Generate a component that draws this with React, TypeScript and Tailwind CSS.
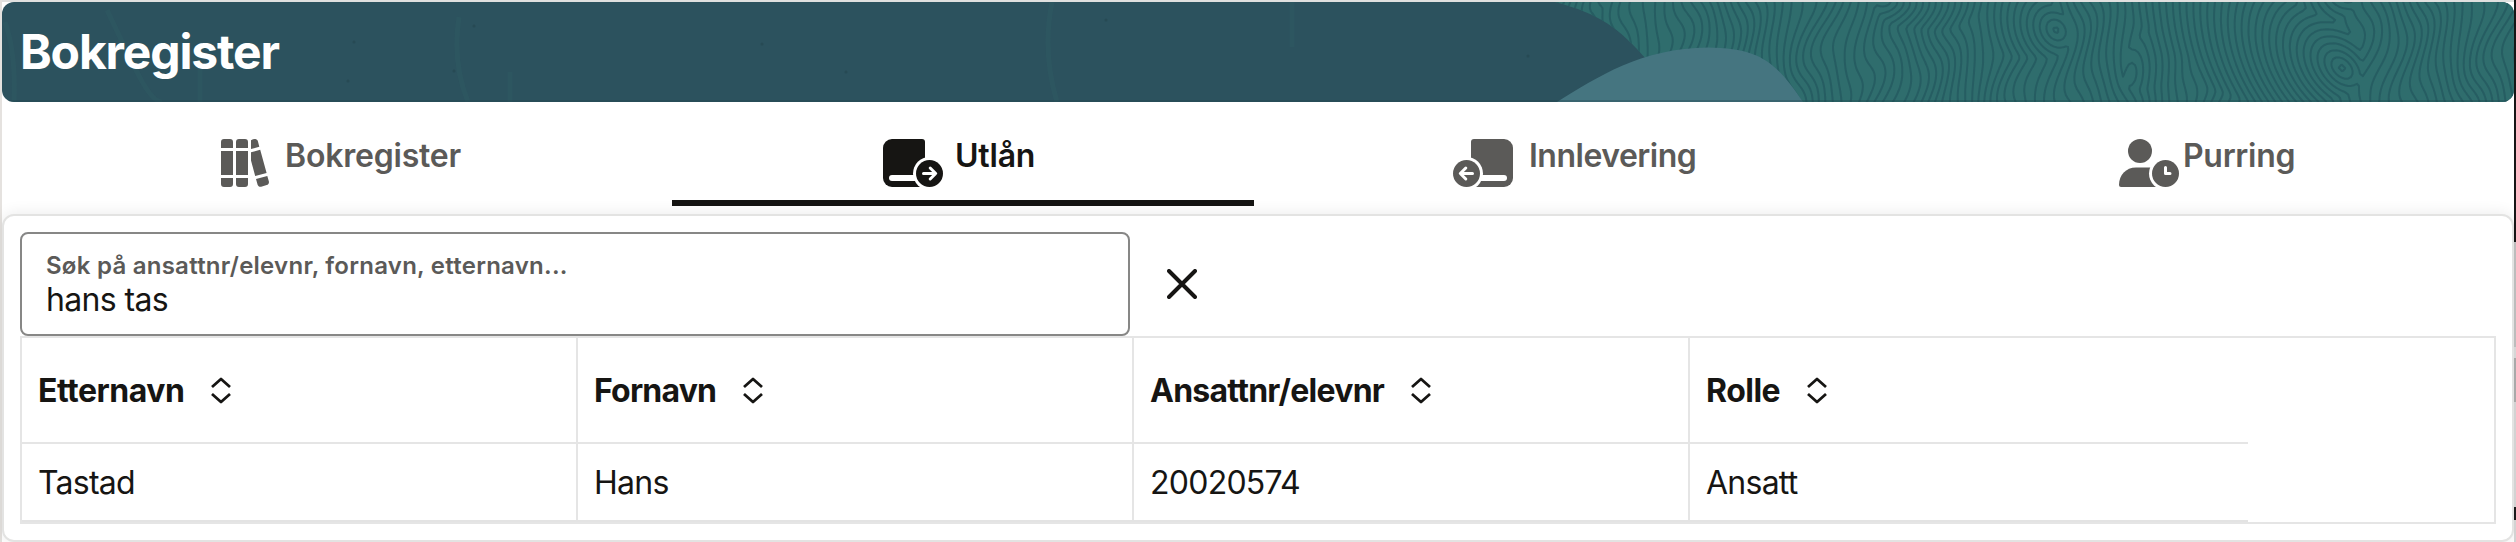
import React from "react";

const W = 960;
const H = 100;
const STEP = 3;

type Knot = { x: number; y: number; stretch: number; tilt: number; size: number };

const knots: Knot[] = [
  { x: 55, y: -10, stretch: 1.4, tilt: 0.6, size: 2 },
  { x: 330, y: -6, stretch: 1, tilt: 0.3, size: -4 },
  { x: 500, y: 28, stretch: 1.1, tilt: -0.2, size: 3 },
  { x: 575, y: 72, stretch: 2, tilt: 0.1, size: -1.4 },
  { x: 690, y: 58, stretch: 1.6, tilt: 0.4, size: -1.6 },
  { x: 786, y: 66, stretch: 1.1, tilt: -0.4, size: 6 },
  { x: 792, y: -14, stretch: 1, tilt: 0, size: 4 },
];

// Height of the wood-grain field; its whole-number contours are the grain lines.
function base(x: number, y: number) {
  return x / 8.4 + 0.75 * Math.sin(y / 16 + x / 55) + 0.7 * Math.sin(x / 27 - y / 34) + 0.2 * Math.sin(x / 9 + y / 11);
}

function softMax(a: number, b: number) {
  const d = a - b;
  return (a + b + Math.sqrt(d * d + 0.15)) / 2;
}

function field(x: number, y: number) {
  let v = base(x, y);
  for (const k of knots) {
    const dx = x - k.x + k.tilt * (y - k.y);
    const dy = (y - k.y) / k.stretch;
    const dist = Math.sqrt(dx * dx + dy * dy + 4) / 6.3;
    const center = k.x / 8.4;
    if (k.size > 0) v = softMax(v, center + k.size - dist);
    else v = -softMax(-v, -(center + k.size + dist));
  }
  return v;
}

function grain() {
  let d = "";
  for (let x = 0; x < W; x += STEP) {
    for (let y = 0; y < H; y += STEP) {
      const pts = [
        [x, y],
        [x + STEP, y],
        [x + STEP, y + STEP],
        [x, y + STEP],
      ];
      const vals = pts.map(([px, py]) => field(px, py));
      const lo = Math.ceil(Math.min(...vals));
      const hi = Math.floor(Math.max(...vals));
      for (let level = lo; level <= hi; level++) {
        const hits: string[] = [];
        for (let i = 0; i < 4; i++) {
          const j = (i + 1) % 4;
          if (vals[i] < level !== vals[j] < level) {
            const t = (level - vals[i]) / (vals[j] - vals[i]);
            hits.push(
              `${(pts[i][0] + t * (pts[j][0] - pts[i][0])).toFixed(1)} ${(pts[i][1] + t * (pts[j][1] - pts[i][1])).toFixed(1)}`,
            );
          }
        }
        for (let i = 0; i + 1 < hits.length; i += 2) d += `M${hits[i]}L${hits[i + 1]}`;
      }
    }
  }
  return d;
}

const grainPath = grain();

function BannerArt() {
  return (
    <svg className="absolute inset-0 h-full w-full" viewBox="0 0 2512 100" preserveAspectRatio="none">
      <defs>
        <clipPath id="wood">
          <path d="M1553 0C1598 12 1617 26 1645 58L1700 100H2512V0Z" />
        </clipPath>
      </defs>
      <g fill="none" stroke="#315f68" strokeWidth="5" opacity="0.3">
        <path d="M3 20Q14 50 12 100M105 8Q120 40 135 70T160 100M198 60V100M457 15Q450 60 466 100M508 70V100M1050 0Q1040 50 1055 100M1290 0V45" />
      </g>
      <g fill="#25464f" opacity="0.6">
        <circle cx="346" cy="79" r="1.5" />
        <circle cx="352" cy="40" r="1.5" />
        <circle cx="452" cy="69" r="1.5" />
        <circle cx="472" cy="24" r="1.5" />
        <circle cx="760" cy="42" r="1.5" />
        <circle cx="844" cy="70" r="1.5" />
        <circle cx="1104" cy="18" r="1.5" />
        <circle cx="1526" cy="54" r="1.5" />
      </g>
      <g clipPath="url(#wood)">
        <rect x="1550" width="962" height="100" fill="#2f6d6d" />
        <path d={grainPath} transform="translate(1554 0)" fill="none" stroke="#245a60" strokeWidth="2" strokeLinecap="round" opacity="0.85" />
      </g>
      <path d="M1555 100C1595 75 1640 46 1706 45.500C1760 46 1775 62 1801 100Z" fill="#457580" />
      <rect y="98" width="2512" height="2" fill="#1f3f49" opacity="0.3" />
    </svg>
  );
}

function LibraryIcon() {
  return (
    <svg className="h-12 w-12 shrink-0" viewBox="0 0 48 48" fill="currentColor">
      <path d="M3 0H9A3 3 0 0 1 12 3V9H0V3A3 3 0 0 1 3 0ZM0 12H12V36H0ZM0 39H12V45A3 3 0 0 1 9 48H3A3 3 0 0 1 0 45Z" />
      <path d="M18 0H24A3 3 0 0 1 27 3V9H15V3A3 3 0 0 1 18 0ZM15 12H27V36H15ZM15 39H27V45A3 3 0 0 1 24 48H18A3 3 0 0 1 15 45Z" />
      <path d="M30 1.300C31.500.4 33 0 34.200.1C35.500.3 36.500 1 36.900 2.300L38.300 7.700L30 10.100ZM30 13.200L39.200 10.800L45.600 34L34.200 37L30 21.500ZM35 39.900L46.300 36.900L47.900 42.500C48.200 44.200 47.300 45.600 45.700 46.100L40.200 47.700C38.500 48.100 37.100 47.200 36.600 45.700Z" />
    </svg>
  );
}

function BookArrowIcon({ flipped = false }: { flipped?: boolean }) {
  return (
    <svg className={flipped ? "h-12 w-[60px] shrink-0 -scale-x-100" : "h-12 w-[60px] shrink-0"} viewBox="0 0 60 48">
      <path d="M9 0H39A3 3 0 0 1 42 3V48H9A9 9 0 0 1 0 39V9A9 9 0 0 1 9 0Z" fill="currentColor" />
      <path d="M9 36H42V42H9A3 3 0 0 1 9 36Z" fill="#fff" />
      <circle cx="46.500" cy="34.500" r="16.500" fill="#fff" />
      <circle cx="46.500" cy="34.500" r="13.500" fill="currentColor" />
      <path d="M40.500 34.500H52.500M47.200 29L52.700 34.500L47.200 40" fill="none" stroke="#fff" strokeWidth="3" strokeLinecap="round" strokeLinejoin="round" />
    </svg>
  );
}

function PersonClockIcon() {
  return (
    <svg className="h-12 w-[60px] shrink-0" viewBox="0 0 60 48">
      <circle cx="21" cy="12" r="12" fill="currentColor" />
      <path d="M17 28.500H40V48H2A2 2 0 0 1 0 46C0 36 7 28.500 17 28.500Z" fill="currentColor" />
      <circle cx="46.500" cy="34.500" r="16.500" fill="#fff" />
      <circle cx="46.500" cy="34.500" r="13.500" fill="currentColor" />
      <path d="M46.500 28.500V34.500H51" fill="none" stroke="#fff" strokeWidth="3" strokeLinecap="round" strokeLinejoin="round" />
    </svg>
  );
}

function SortIcon() {
  return (
    <svg className="mt-px h-[27px] w-5 shrink-0" viewBox="0 0 20 27" fill="none" stroke="currentColor" strokeWidth="2.800" strokeLinejoin="round" strokeLinecap="butt">
      <path d="M1 10L10 2L19 10M1 17L10 25L19 17" />
    </svg>
  );
}

interface TabProps {
  label: string;
  icon: React.ReactNode;
  active?: boolean;
  className: string;
}

function Tab({ label, icon, active, className }: TabProps) {
  return (
    <button
      className={`flex h-[104px] w-[582px] shrink-0 items-start border-b-[6px] pt-[37px] ${active ? "border-[#161513] text-[#161513]" : "border-transparent text-[#5b5a58]"} ${className}`}
    >
      {icon}
      <span className="-mt-[7px] text-[32px] leading-[48px] font-semibold whitespace-nowrap">{label}</span>
    </button>
  );
}

const columns = [
  { title: "Etternavn", value: "Tastad", tracking: "tracking-[-0.5px]" },
  { title: "Fornavn", value: "Hans", tracking: "tracking-[-0.8px]" },
  { title: "Ansattnr/elevnr", value: "20020574", tracking: "tracking-[-0.75px]" },
  { title: "Rolle", value: "Ansatt", tracking: "tracking-[-0.5px]" },
];

export default function App() {
  return (
    <div className="flex h-[542px] w-[2516px] overflow-hidden bg-[#e5e2df] font-['Inter',sans-serif] text-[#161513]">
      <div className="w-0.5 shrink-0" />
      <div className="flex w-[2512px] flex-col bg-white">
        <div className="h-0.5 shrink-0 bg-[#e0e0df]" />
        <header className="relative flex h-[100px] shrink-0 items-center overflow-hidden rounded-xl bg-[#2c525e] pl-[18px]">
          <BannerArt />
          <h1 className="relative text-[48px] leading-[60px] font-bold tracking-[-1.15px] text-white">Bokregister</h1>
        </header>
        <nav className="flex h-[112px] shrink-0 gap-10 pl-12">
          <Tab className="gap-4 pl-[171px] tracking-[-0.2px]" icon={<LibraryIcon />} label="Bokregister" />
          <Tab className="gap-3 pl-[211px] tracking-[-0.2px]" icon={<BookArrowIcon />} label="Utlån" active />
          <Tab className="gap-4 pl-[159px] tracking-[-0.5px]" icon={<BookArrowIcon flipped />} label="Innlevering" />
          <Tab className="gap-1 pl-[203px] tracking-[-0.3px]" icon={<PersonClockIcon />} label="Purring" />
        </nav>
        <main className="h-[328px] shrink-0 rounded-xl border-2 border-[#e3e3e2] bg-white p-4 shadow-[0_0_16px_rgba(0,0,0,0.09)]">
          <div className="flex h-[104px] items-center">
            <label className="flex h-[104px] w-[1110px] flex-col rounded-lg border-2 border-[#878786] pt-4 pl-6">
              <span className="text-[24px] leading-8 font-semibold tracking-[0.25px] whitespace-nowrap text-[#5b5a58]">
                Søk på ansattnr/elevnr, fornavn, etternavn...
              </span>
              <span className="text-[32px] leading-9 tracking-[-0.65px]">hans tas</span>
            </label>
            <button className="ml-[37px]" aria-label="Close">
              <svg className="h-[30px] w-[30px]" viewBox="0 0 30 30" fill="none" stroke="currentColor" strokeWidth="4" strokeLinecap="round">
                <path d="M2 2L28 28M28 2L2 28" />
              </svg>
            </button>
          </div>
          <div className="h-[188px] border-2 border-[#e5e5e5]">
            <div className="flex h-[106px] w-[2226px] border-b-2 border-[#e5e5e5]">
              {columns.map((c) => (
                <div key={c.title} className="flex w-[556px] shrink-0 items-center gap-[27px] border-r-2 border-[#e5e5e5] pl-4 last:w-[558px] last:border-r-0">
                  <span className={`pt-0.5 text-[32px] leading-10 font-bold ${c.tracking}`}>{c.title}</span>
                  <SortIcon />
                </div>
              ))}
            </div>
            <div className="flex h-[78px] w-[2226px] border-b-2 border-[#e3e3e3]">
              {columns.map((c) => (
                <div key={c.title} className="flex w-[556px] shrink-0 items-center border-r-2 border-[#e5e5e5] pl-4 last:w-[558px] last:border-r-0">
                  <span className="pt-0.5 text-[32px] leading-10 tracking-[-0.75px]">{c.value}</span>
                </div>
              ))}
            </div>
          </div>
        </main>
      </div>
      <div className="flex w-0.5 shrink-0 flex-col bg-[#d2d2d2]">
        <div className="h-[242px] bg-[#161616]" />
        <div className="h-[105px] bg-[#bcbcbc]" />
        <div className="h-[11px] bg-[#d6d6d6]" />
        <div className="h-[44px] bg-[#a9a9a9]" />
        <div className="h-[105px] bg-[#d2d2d2]" />
        <div className="h-[13px] bg-[#1b1b1b]" />
      </div>
    </div>
  );
}
